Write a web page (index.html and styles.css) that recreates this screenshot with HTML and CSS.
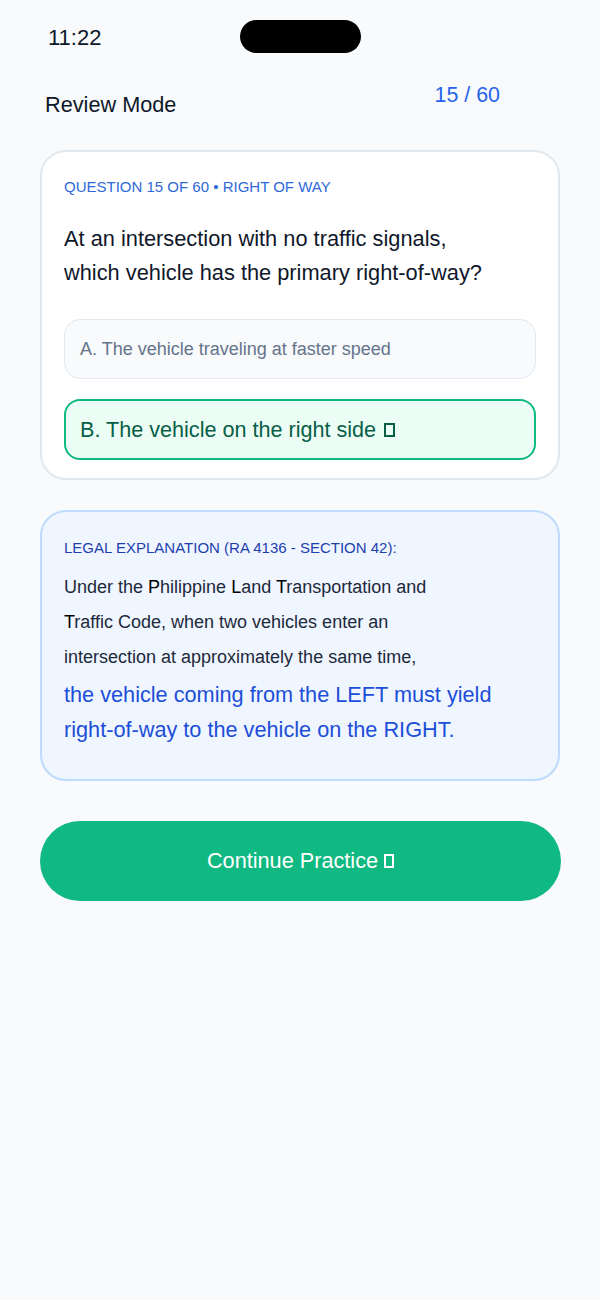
FILE: index.html
```html
<!DOCTYPE html>
<html>
<head>
<meta charset="utf-8">
<link rel="stylesheet" href="styles.css">
</head>
<body>
<div class="screen">
  <div class="status">
    <span class="time">11:22</span>
    <span class="island"></span>
  </div>
  <div class="header">
    <span class="mode">Review Mode</span>
    <span class="count">15 / 60</span>
  </div>
  <div class="card">
    <div class="label">QUESTION 15 OF 60 • RIGHT OF WAY</div>
    <div class="question">At an intersection with no traffic signals,<br>which vehicle has the primary right-of-way?</div>
    <div class="option">A. The vehicle traveling at faster speed</div>
    <div class="option correct">B. The vehicle on the right side <span class="tofu"></span></div>
  </div>
  <div class="explain">
    <div class="elabel">LEGAL EXPLANATION (RA 4136 - SECTION 42):</div>
    <div class="ebody">Under the <b>P</b>hilippine <b>L</b>and <b>T</b>ransportation and<br><b>T</b>raffic Code, when two vehicles enter an<br>intersection at approximately the same time,</div>
    <div class="ehigh">the vehicle coming from the LEFT must yield<br>right-of-way to the vehicle on the RIGHT.</div>
  </div>
  <button class="cta">Continue Practice <span class="tofu"></span></button>
</div>
</body>
</html>
```

FILE: styles.css
```css
* { box-sizing: border-box; }
html, body { margin: 0; padding: 0; }
body {
  background: #f8fafc;
  font-family: "Liberation Sans", Arial, sans-serif;
  color: #0f172a;
  width: 600px;
  min-height: 1300px;
}
.screen {
  padding: 0 40px;
}
.status {
  height: 74px;
  display: flex;
  align-items: flex-start;
  position: relative;
}
.time {
  font-size: 22px;
  margin-left: 8px;
  margin-top: 26px;
  line-height: 24px;
}
.island {
  position: absolute;
  left: 200px;
  top: 20px;
  width: 121px;
  height: 33px;
  border-radius: 17px;
  background: #000;
}
.header {
  display: flex;
  justify-content: space-between;
  align-items: flex-start;
  height: 76px;
  padding: 0 60px 0 5px;
}
.mode {
  font-size: 21.7px;
  line-height: 24px;
  margin-top: 19px;
}
.count {
  font-size: 21.4px;
  line-height: 24px;
  margin-top: 9px;
  color: #2563eb;
}
.card {
  background: #fff;
  border: 2px solid #e2e8f0;
  border-radius: 26px;
  padding: 26px 22px 18px 22px;
}
.label {
  font-size: 15px;
  color: #2f6ad8;
  line-height: 18px;
}
.question {
  font-size: 21.8px;
  line-height: 34px;
  margin-top: 26px;
  color: #0f172a;
}
.option {
  margin-top: 29px;
  height: 60px;
  border: 1px solid #e2e8f0;
  background: #f8fafc;
  border-radius: 16px;
  display: flex;
  align-items: center;
  padding: 0 15px;
  font-size: 18px;
  color: #64748b;
}
.option.correct {
  margin-top: 20px;
  height: 61px;
  border: 2px solid #10b981;
  background: #ecfdf5;
  color: #065f46;
  font-size: 21.6px;
  padding: 0 14px;
}
.tofu {
  display: inline-block;
  flex: none;
  width: 11px;
  height: 14px;
  border: 2px solid currentColor;
  margin-left: 8px;
  align-self: center;
  margin-top: 1px;
}
.cta .tofu {
  width: 10px;
  height: 14px;
  margin-left: 6px;
  margin-top: 0;
}
.explain {
  margin-top: 30px;
  background: #eff6ff;
  border: 2px solid #bfdbfe;
  border-radius: 26px;
  padding: 26px 22px 32px 22px;
}
.elabel {
  font-size: 15px;
  line-height: 20px;
  color: #1e40af;
}
.ebody {
  margin-top: 12px;
  font-size: 18px;
  line-height: 35px;
  color: #1e293b;
}
.ebody b {
  font-weight: normal;
  color: #000;
}
.ehigh {
  font-size: 21.7px;
  line-height: 35px;
  color: #1d4ed8;
  margin-top: 2px;
}
.cta {
  display: flex;
  align-items: center;
  justify-content: center;
  width: 521px;
  margin-top: 40px;
  height: 80px;
  border: none;
  border-radius: 40px;
  background: #10b981;
  color: #fff;
  font-family: "Liberation Sans", Arial, sans-serif;
  font-size: 21.7px;
  padding: 0;
}
```
